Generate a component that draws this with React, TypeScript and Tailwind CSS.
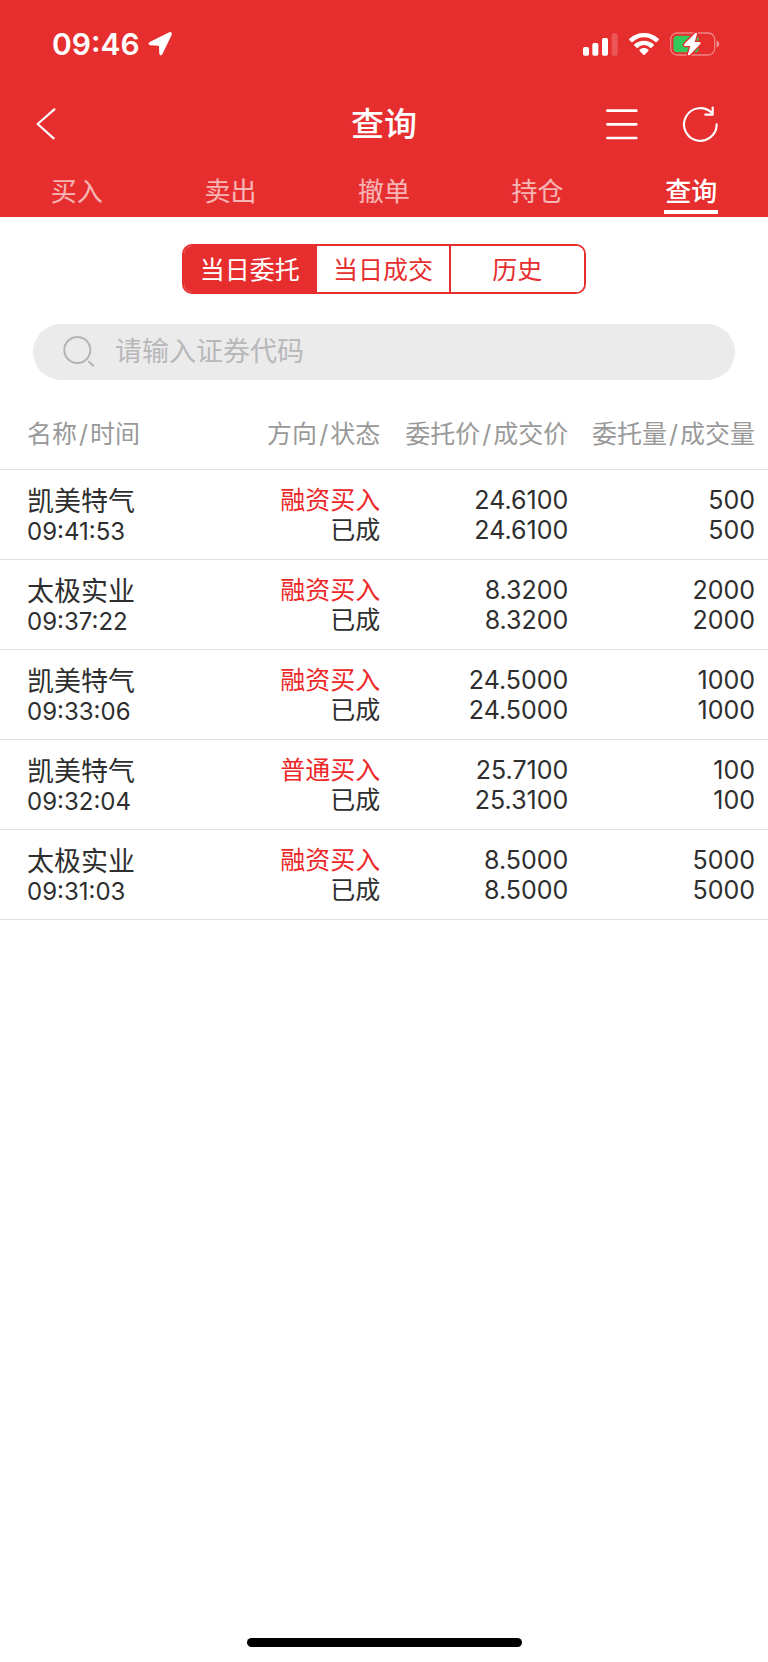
import { useState } from "react";

type Order = {
  name: string;
  time: string;
  side: string;
  status: string;
  price: string;
  dealPrice: string;
  qty: string;
  dealQty: string;
};

const tabs = ["买入", "卖出", "撤单", "持仓", "查询"];
const ranges = ["当日委托", "当日成交", "历史"];

const orders: Order[] = [
  { name: "凯美特气", time: "09:41:53", side: "融资买入", status: "已成", price: "24.6100", dealPrice: "24.6100", qty: "500", dealQty: "500" },
  { name: "太极实业", time: "09:37:22", side: "融资买入", status: "已成", price: "8.3200", dealPrice: "8.3200", qty: "2000", dealQty: "2000" },
  { name: "凯美特气", time: "09:33:06", side: "融资买入", status: "已成", price: "24.5000", dealPrice: "24.5000", qty: "1000", dealQty: "1000" },
  { name: "凯美特气", time: "09:32:04", side: "普通买入", status: "已成", price: "25.7100", dealPrice: "25.3100", qty: "100", dealQty: "100" },
  { name: "太极实业", time: "09:31:03", side: "融资买入", status: "已成", price: "8.5000", dealPrice: "8.5000", qty: "5000", dealQty: "5000" },
];

function StatusBar() {
  return (
    <div className="flex h-[88px] items-center justify-between pr-12 pl-[52px] text-white">
      <div className="flex items-center gap-2">
        <span className="text-[30px] leading-9 font-semibold">09:46</span>
        <svg className="h-6 w-6" viewBox="0 0 72 72" fill="currentColor" aria-hidden="true">
          <path d="M64 1 L5 30 Q-2 36 6 40 L31 41 Q33 41 33 43 L34 66 Q37 74 43 67 L71 9 Q73 -2 64 1Z" />
        </svg>
      </div>
      <div className="flex items-center gap-[11px]">
        <svg className="h-[23px] w-[35px]" viewBox="0 0 105 69" fill="currentColor" aria-hidden="true">
          <rect x="0" y="42" width="18" height="26" rx="5" />
          <rect x="28" y="30" width="18" height="38" rx="5" />
          <rect x="57" y="15" width="18" height="53" rx="5" />
          <rect x="86" y="1" width="18" height="67" rx="5" opacity="0.2" />
        </svg>
        <svg className="h-[22px] w-[30px]" viewBox="0 0 90 66" fill="currentColor" aria-hidden="true">
          <path d="M45 0 C62 0 77 6 89 17 Q91 19 89 21 L83 27 Q81 28 79 27 C69 18 58 13 45 13 C32 13 21 18 11 27 Q9 28 7 27 L1 21 Q-1 19 1 17 C13 6 28 0 45 0Z" />
          <path d="M45 23 C56 23 66 27 74 34 Q76 36 74 38 L67 44 Q65 46 63 44 C58 39 52 36 45 36 C38 36 32 39 27 44 Q25 46 23 44 L16 38 Q14 36 16 34 C24 27 34 23 45 23Z" />
          <path d="M45 45 C50 45 55 47 58 50 Q60 52 58 54 L47 65 Q45 67 43 65 L32 54 Q30 52 32 50 C35 47 40 45 45 45Z" />
        </svg>
        <svg className="h-6 w-[50px]" viewBox="0 0 150 72" aria-hidden="true">
          <rect x="2" y="3" width="132" height="66" rx="19" fill="none" stroke="#fff" strokeOpacity="0.42" strokeWidth="4" />
          <path d="M140 25 Q148 30 148 36 Q148 42 140 47Z" fill="#fff" fillOpacity="0.5" />
          <path d="M22 11 H78 Q86 11 86 22 V50 Q86 61 76 61 H22 Q10 61 10 49 V23 Q10 11 22 11Z" fill="#34c759" />
          <path
            d="M76 3 L43 36 Q40 42 47 42 H61 L54 66 Q54 72 59 69 L91 36 Q94 30 87 30 H74 L81 6 Q81 0 76 3Z"
            fill="#fff"
            stroke="#e72e2f"
            strokeWidth="8"
            paintOrder="stroke"
          />
        </svg>
      </div>
    </div>
  );
}

function Header() {
  const [active, setActive] = useState("查询");
  return (
    <header className="bg-[#e72e2f]">
      <StatusBar />
      <div className="grid h-[72px] grid-cols-[1fr_auto_1fr] items-center text-white">
        <button type="button" aria-label="返回" className="ml-9 justify-self-start">
          <svg className="h-8 w-5" viewBox="0 0 60 96" fill="none" stroke="currentColor" strokeWidth="6.5" strokeLinecap="round" strokeLinejoin="round" aria-hidden="true">
            <path d="M55 4 L5 48 L53 91" />
          </svg>
        </button>
        <h1 className="text-[33px] leading-10 font-medium">查询</h1>
        <div className="mr-[50px] flex items-center gap-11 justify-self-end">
          <button type="button" aria-label="菜单">
            <svg className="h-8 w-8" viewBox="0 0 96 96" stroke="currentColor" strokeWidth="8" strokeLinecap="round" aria-hidden="true">
              <path d="M4 8 H91 M4 49 H91 M4 90 H91" />
            </svg>
          </button>
          <button type="button" aria-label="刷新">
            <svg className="h-9 w-9" viewBox="0 0 108 108" fill="none" stroke="currentColor" strokeWidth="6.5" strokeLinecap="round" strokeLinejoin="round" aria-hidden="true">
              <path d="M104 55 A49 49 0 1 1 90 21" />
              <path d="M92 5 V26 H70" />
            </svg>
          </button>
        </div>
      </div>
      <nav className="grid grid-cols-5">
        {tabs.map((tab) => (
          <a
            key={tab}
            href="#"
            onClick={() => setActive(tab)}
            aria-current={tab === active ? "page" : undefined}
            className={
              tab === active
                ? "flex h-[57px] flex-col items-center justify-end pb-[3px] text-[26px] leading-9 font-medium text-white"
                : "flex h-[57px] flex-col items-center justify-end pb-[7px] text-[26px] leading-9 text-white/65"
            }
          >
            {tab}
            {tab === active && <span className="h-1 w-[54px] bg-white" />}
          </a>
        ))}
      </nav>
    </header>
  );
}

function RangeSwitch() {
  const [active, setActive] = useState("当日委托");
  return (
    <div className="mx-auto mt-[27px] grid h-[50px] w-[404px] grid-cols-3 divide-x-2 divide-[#e72e2f] overflow-hidden rounded-[10px] border-2 border-[#e72e2f]">
      {ranges.map((range) => (
        <button
          key={range}
          type="button"
          aria-pressed={range === active}
          onClick={() => setActive(range)}
          className={
            range === active
              ? "bg-[#e72e2f] pt-[2px] text-[25px] leading-9 text-white"
              : "bg-white pt-[2px] text-[25px] leading-9 text-[#e72e2f]"
          }
        >
          {range}
        </button>
      ))}
    </div>
  );
}

function SearchBox() {
  return (
    <label className="mx-[33px] mt-[30px] flex h-14 items-center gap-5 rounded-full bg-[#ebebeb] pl-[30px]">
      <svg className="h-8 w-8 shrink-0" viewBox="0 0 96 96" fill="none" stroke="#b4b4b6" strokeWidth="6" strokeLinecap="round" aria-hidden="true">
        <circle cx="43" cy="42" r="39" />
        <path d="M78 77 L91 89" />
      </svg>
      <input
        type="text"
        aria-label="证券代码"
        placeholder="请输入证券代码"
        className="min-w-0 flex-1 bg-transparent text-[27px] leading-9 text-[#333] outline-none placeholder:text-[#b8b8ba]"
      />
    </label>
  );
}

function PairLabel({ first, second }: { first: string; second: string }) {
  return (
    <>
      {first}
      <span className="mx-[2px]">/</span>
      {second}
    </>
  );
}

function OrderTable() {
  return (
    <table className="mt-5 w-full table-fixed border-collapse text-[#2e2e2e]">
      <thead>
        <tr className="h-[69px] border-b border-[#e2e2e2] text-[25px] leading-9 whitespace-nowrap text-[#999]">
          <th scope="col" className="w-[25%] pl-[27px] text-left font-normal">
            <PairLabel first="名称" second="时间" />
          </th>
          <th scope="col" className="w-[24.5%] text-right font-normal">
            <PairLabel first="方向" second="状态" />
          </th>
          <th scope="col" className="w-[24.5%] text-right font-normal">
            <PairLabel first="委托价" second="成交价" />
          </th>
          <th scope="col" className="w-[26%] pr-[13px] text-right font-normal">
            <PairLabel first="委托量" second="成交量" />
          </th>
        </tr>
      </thead>
      <tbody>
        {orders.map((order) => (
          <tr key={order.time} className="h-[90px] border-b border-[#e2e2e2] text-[25px] leading-[30px]">
            <td className="pt-1.5 pl-[27px]">
              <div className="text-[27px]">{order.name}</div>
              <div className="text-[24px]">{order.time}</div>
            </td>
            <td className="pt-[2px] text-right">
              <div className="text-[#ed2728]">{order.side}</div>
              <div>{order.status}</div>
            </td>
            <td className="pt-[2px] text-right">
              <div>{order.price}</div>
              <div>{order.dealPrice}</div>
            </td>
            <td className="pt-[2px] pr-[13px] text-right">
              <div>{order.qty}</div>
              <div>{order.dealQty}</div>
            </td>
          </tr>
        ))}
      </tbody>
    </table>
  );
}

export default function App() {
  return (
    <div className="flex min-h-screen flex-col bg-white font-[Inter,'Noto_Sans_CJK_SC',sans-serif]">
      <Header />
      <main className="flex-1">
        <RangeSwitch />
        <SearchBox />
        <OrderTable />
      </main>
      <div className="mx-auto mb-[15px] h-[9px] w-[275px] rounded-full bg-black" />
    </div>
  );
}
